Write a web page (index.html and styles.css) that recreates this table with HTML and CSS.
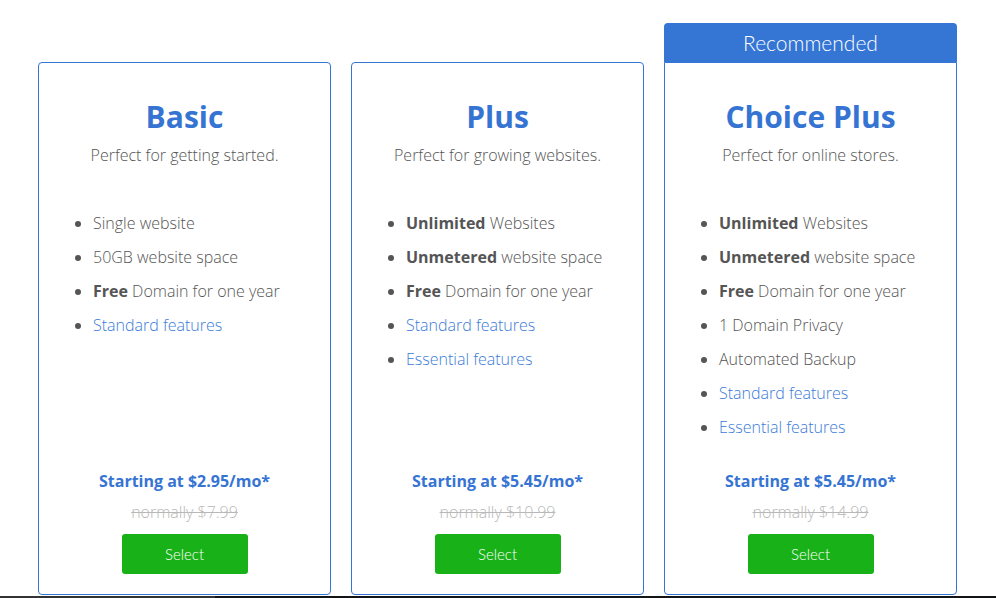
FILE: index.html
```html
<!DOCTYPE html>
<html lang="en">
<head>
<meta charset="utf-8">
<title>Plans</title>
<link rel="stylesheet" href="styles.css">
</head>
<body>
<main class="plans">
  <div class="recommended">Recommended</div>

  <section class="card">
    <h2 class="card-title">Basic</h2>
    <p class="card-sub">Perfect for getting started.</p>
    <ul class="features">
      <li>Single website</li>
      <li>50GB website space</li>
      <li><b>Free</b> Domain for one year</li>
      <li><a href="#">Standard features</a></li>
    </ul>
    <div class="pricing">
      <p class="price">Starting at $2.95/mo*</p>
      <p class="normal">normally $7.99</p>
      <button class="select">Select</button>
    </div>
  </section>

  <section class="card">
    <h2 class="card-title">Plus</h2>
    <p class="card-sub">Perfect for growing websites.</p>
    <ul class="features">
      <li><b>Unlimited</b> Websites</li>
      <li><b>Unmetered</b> website space</li>
      <li><b>Free</b> Domain for one year</li>
      <li><a href="#">Standard features</a></li>
      <li><a href="#">Essential features</a></li>
    </ul>
    <div class="pricing">
      <p class="price">Starting at $5.45/mo*</p>
      <p class="normal">normally $10.99</p>
      <button class="select">Select</button>
    </div>
  </section>

  <section class="card card-featured">
    <h2 class="card-title">Choice Plus</h2>
    <p class="card-sub">Perfect for online stores.</p>
    <ul class="features">
      <li><b>Unlimited</b> Websites</li>
      <li><b>Unmetered</b> website space</li>
      <li><b>Free</b> Domain for one year</li>
      <li>1 Domain Privacy</li>
      <li>Automated Backup</li>
      <li><a href="#">Standard features</a></li>
      <li><a href="#">Essential features</a></li>
    </ul>
    <div class="pricing">
      <p class="price">Starting at $5.45/mo*</p>
      <p class="normal">normally $14.99</p>
      <button class="select">Select</button>
    </div>
  </section>
</main>
<div class="strip"><span class="strip-left"></span></div>
</body>
</html>
```

FILE: styles.css
```css
* { box-sizing: border-box; }

html, body {
  margin: 0;
  padding: 0;
  background: #ffffff;
}

body {
  font-family: "Open Sans", "Liberation Sans", sans-serif;
  color: #555555;
  overflow: hidden;
}

.plans {
  display: grid;
  grid-template-columns: repeat(3, 293px);
  grid-template-rows: 39px 533px;
  column-gap: 20px;
  padding: 23px 0 0 38px;
}

.recommended {
  grid-column: 3;
  grid-row: 1;
  background: #3575d4;
  color: #ffffff;
  border-radius: 4px 4px 0 0;
  font-family: "Lato", "Liberation Sans", sans-serif;
  font-weight: 300;
  font-size: 21px;
  line-height: 40px;
  text-align: center;
}

.card {
  grid-row: 2;
  display: flex;
  flex-direction: column;
  border: 1px solid #3575d4;
  border-radius: 4px;
  padding: 34px 14px 20px;
}

.card-featured {
  grid-column: 3;
  border-top-left-radius: 0;
  border-top-right-radius: 0;
}

.card-title {
  margin: 0;
  font-size: 30px;
  font-weight: 700;
  line-height: 40px;
  color: #3674d3;
  text-align: center;
}

.card-sub {
  margin: 6px 0 0;
  font-size: 16px;
  font-weight: 300;
  line-height: 24px;
  color: #555555;
  text-align: center;
}

.features {
  margin: 44px 0 0;
  padding: 0 0 0 40px;
  list-style: disc;
}

.features li {
  font-size: 16px;
  font-weight: 300;
  line-height: 24px;
  margin-bottom: 10px;
  color: #555555;
}

.features b {
  font-weight: 700;
}

.features a {
  color: #3b7bd8;
  text-decoration: none;
}

.pricing {
  margin-top: auto;
  display: flex;
  flex-direction: column;
  align-items: center;
}

.price {
  margin: 0;
  font-size: 16px;
  font-weight: 700;
  line-height: 24px;
  color: #3674d3;
}

.normal {
  margin: 7px 0 0;
  font-size: 16px;
  font-weight: 300;
  line-height: 24px;
  color: #b8b8b8;
  text-decoration: line-through;
}

.select {
  margin-top: 10px;
  width: 126px;
  height: 40px;
  border: 0;
  border-radius: 3px;
  background: #18b218;
  color: #ffffff;
  font-family: "Lato", "Liberation Sans", sans-serif;
  font-weight: 300;
  font-size: 15px;
  cursor: pointer;
}

.strip {
  display: flex;
  height: 6px;
  margin-top: 1px;
  background: #121416;
}

.strip-left {
  width: 215px;
  background: #333333;
}
```
